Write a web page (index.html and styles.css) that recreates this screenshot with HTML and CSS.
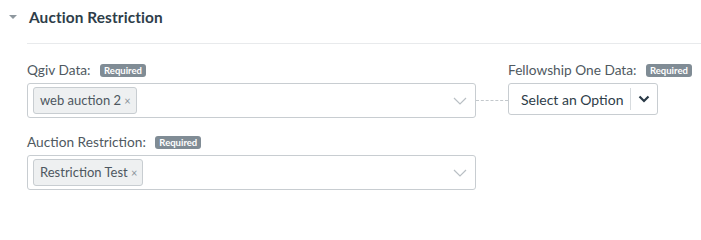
FILE: index.html
```html
<!DOCTYPE html>
<html>
<head>
<meta charset="utf-8">
<link rel="stylesheet" href="styles.css">
</head>
<body>
<section class="panel">
  <div class="head">
    <span class="caret"></span>
    <h2 class="title">Auction Restriction</h2>
  </div>
  <div class="body">
    <div class="row">
      <div class="field wide">
        <div class="label">Qgiv Data: <span class="badge">Required</span></div>
        <div class="multi">
          <span class="tag">web auction 2 <span class="x">×</span></span>
          <svg class="chev" width="14" height="8" viewBox="0 0 14 8"><path d="M1 1 L7 7 L13 1" fill="none" stroke="#b9bfc4" stroke-width="1.2"/></svg>
        </div>
      </div>
      <div class="link"></div>
      <div class="field">
        <div class="label">Fellowship One Data: <span class="badge">Required</span></div>
        <div class="select">
          <span class="sel-text">Select an Option</span>
          <span class="sel-btn"><svg width="12" height="8" viewBox="0 0 12 8"><path d="M1.5 1.5 L6 6 L10.5 1.5" fill="none" stroke="#2a3a47" stroke-width="2.2"/></svg></span>
        </div>
      </div>
    </div>
    <div class="row">
      <div class="field wide">
        <div class="label">Auction Restriction: <span class="badge">Required</span></div>
        <div class="multi">
          <span class="tag">Restriction Test <span class="x">×</span></span>
          <svg class="chev" width="14" height="8" viewBox="0 0 14 8"><path d="M1 1 L7 7 L13 1" fill="none" stroke="#b9bfc4" stroke-width="1.2"/></svg>
        </div>
      </div>
    </div>
  </div>
</section>
</body>
</html>
```
FILE: styles.css
```css
* { box-sizing: border-box; }
body {
  margin: 0;
  background: #fff;
  font-family: Lato, "Open Sans", Arial, sans-serif;
  color: #4d5760;
}
.panel { padding: 0 0 0 8px; }
.head {
  display: flex;
  align-items: center;
  height: 33px;
}
.caret {
  width: 0; height: 0;
  border-left: 4px solid transparent;
  border-right: 4px solid transparent;
  border-top: 4px solid #8e979e;
  margin: 1px 12px 0 1px;
}
.title {
  margin: 0;
  font-size: 15.4px;
  font-weight: 700;
  color: #2e3d49;
  letter-spacing: 0.1px;
}
.body {
  margin-left: 19px;
  border-top: 1px solid #e8eaec;
  margin-top: 10px;
  padding-top: 19px;
}
.row {
  display: flex;
  align-items: flex-start;
  margin-bottom: 17px;
}
.field { display: flex; flex-direction: column; }
.field.wide { width: 449px; }
.label {
  font-size: 13.7px;
  color: #4f5961;
  height: 14px;
  line-height: 14px;
  margin-bottom: 6px;
  display: flex;
  align-items: center;
  white-space: pre;
}
.badge {
  display: inline-block;
  background: #808c95;
  color: #fff;
  font-size: 9.5px;
  font-weight: 700;
  height: 13px;
  line-height: 13px;
  padding: 0 4px;
  border-radius: 3px;
  margin-left: 6px;
}
.multi {
  height: 35px;
  border: 1px solid #c8cdd1;
  border-radius: 3px;
  display: flex;
  align-items: center;
  justify-content: space-between;
  padding: 0 8px 0 5px;
}
.tag {
  height: 27px;
  line-height: 25px;
  border: 1px solid #c8cdd1;
  border-radius: 3px;
  background: #eef0f1;
  padding: 0 5px 0 6px;
  font-size: 13px;
  color: #4d5760;
}
.tag .x { font-size: 11px; color: #8a939a; }
.chev { display: block; }
.link {
  width: 32px;
  margin-top: 37px;
  border-top: 1px dashed #c3c8cc;
}
.select {
  width: 150px;
  height: 32px;
  border: 1px solid #c8cdd1;
  border-radius: 3px;
  display: flex;
  align-items: center;
  padding-left: 12px;
  font-size: 14px;
  color: #2e3d49;
}
.sel-text { flex: 1; }
.sel-btn {
  width: 27px;
  height: 22px;
  border-left: 1px solid #d7dbde;
  display: flex;
  align-items: center;
  justify-content: center;
}
.sel-btn svg { display: block; }
```
